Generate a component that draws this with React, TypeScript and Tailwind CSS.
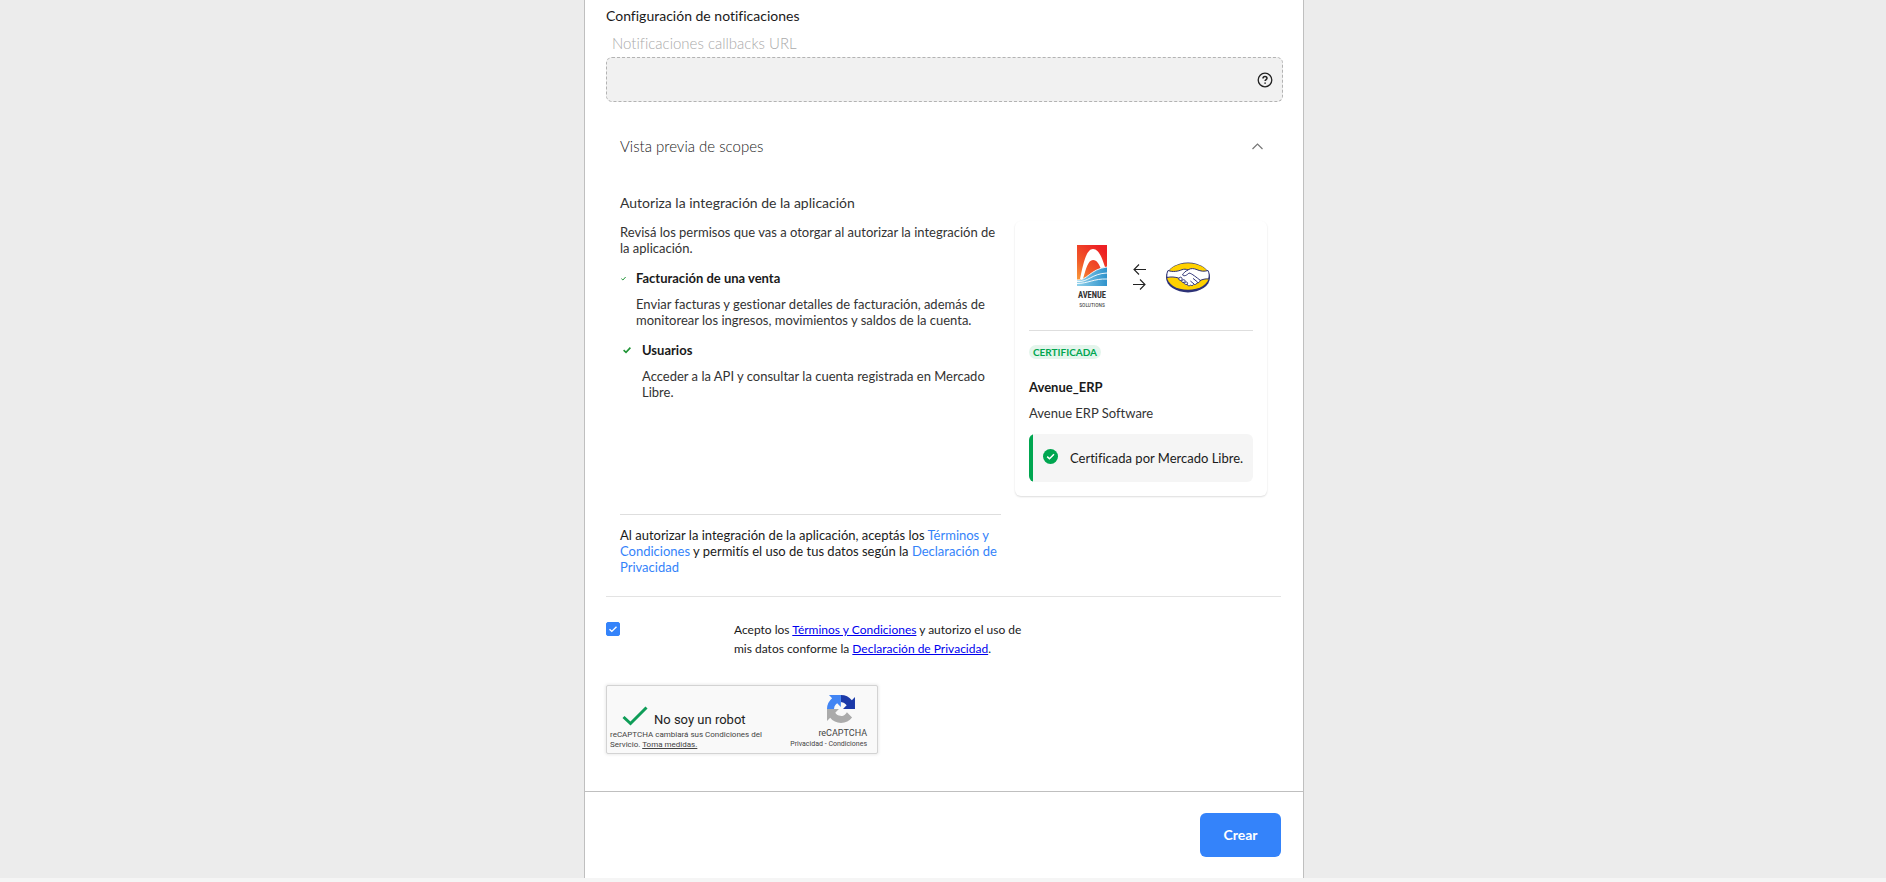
import React, { useState } from 'react';

const scopes = [
  {
    title: 'Facturación de una venta',
    lines: ['Enviar facturas y gestionar detalles de facturación, además de', 'monitorear los ingresos, movimientos y saldos de la cuenta.'],
    small: true,
  },
  {
    title: 'Usuarios',
    lines: ['Acceder a la API y consultar la cuenta registrada en Mercado', 'Libre.'],
    small: false,
  },
];

const HelpIcon = () => (
  <svg width="16" height="16" viewBox="0 0 16 16" fill="none" stroke="#222" strokeWidth="1.3">
    <circle cx="8" cy="8" r="6.8" />
    <path d="M6 6.400C6 5.200 6.900 4.500 8 4.500s2 .7 2 1.800c0 1.300-1.900 1.300-1.900 2.800" strokeWidth="1.500" />
    <path d="M7.300 10.400h1.600v1.400H7.300z" fill="#222" stroke="none" />
  </svg>
);

const Tick = ({ size }: { size: number }) => (
  <svg width={size} height={size} viewBox="0 0 8 8" fill="none" stroke="#1f9435" strokeWidth="1.6" className="shrink-0">
    <path d="M.6 4.200 3 6.400 7.400 1.600" />
  </svg>
);

const AvenueLogo = () => (
  <svg width="30" height="64" viewBox="0 0 30 64" role="img" aria-label="Avenue Solutions">
    <defs>
      <linearGradient id="sun" x1="0" y1="1" x2="0.7" y2="0">
        <stop offset="0" stopColor="#fbb040" />
        <stop offset="0.45" stopColor="#f15a29" />
        <stop offset="1" stopColor="#ed2024" />
      </linearGradient>
      <linearGradient id="sea" x1="0" y1="0" x2="1" y2="0">
        <stop offset="0" stopColor="#8fd0ea" />
        <stop offset="1" stopColor="#2f93cc" />
      </linearGradient>
    </defs>
    <path d="M0 0h30v41H0z" fill="url(#sun)" />
    <path d="M3 34C6 20 9 4 16 4c6 0 9 9 12 18l-4 2c-2-5-4-9-8-9-5 0-7 9-10 19z" fill="#fff" />
    <path d="M0 35c10 1 13-11 30-13v19H0z" fill="url(#sea)" />
    <path d="M0 35c10 1 13-11 30-13M0 36.500c11 1 15-8 30-8.500M0 38.500c11 0 17-5 30-4.500" fill="none" stroke="#fff" strokeWidth="0.900" />
    <text x="15" y="53" textAnchor="middle" fontSize="8.500" fontWeight="700" fill="#333" fontFamily="Roboto Condensed, Liberation Sans Narrow, Roboto, sans-serif">AVENUE</text>
    <text x="15" y="62" textAnchor="middle" fontSize="5.500" fill="#333" fontFamily="Roboto Condensed, Liberation Sans Narrow, Roboto, sans-serif">SOLUTIONS</text>
  </svg>
);

const MercadoLibreLogo = () => (
  <svg width="44" height="32" viewBox="0 0 44 32" role="img" aria-label="Mercado Libre">
    <ellipse cx="22" cy="16.500" rx="22" ry="15" fill="#2d3277" />
    <ellipse cx="22" cy="15.500" rx="21" ry="13.300" fill="#ffd100" />
    <path d="M2 9.500c5 1.800 10 .8 14-.8 2-.8 4-.6 6 .2 3-2 6-1.500 9-.2 4 1.600 7 2 11 .8 1.500 3 1.500 6 .5 8.500-3-.5-6 .5-8.500 1.500-.3 2-1.600 2.500-3 2.300-.5 1.600-2 2-3.200 1.600-1 1.400-2.300 1.400-3.300.8-1.200 1-3 .6-3.700-.8-2 .2-2.800-.8-2.800-2-1.500.3-2.600-.5-2.600-1.800-1.800.2-3-1-2.600-2.500C9 16 5 15.500 1 16.500c-.5-2.500 0-5 1-7z" fill="#fff" stroke="#2d3277" strokeWidth="1" />
    <path d="M22 9c-2.500 1-4.500 3-5.500 5 2 1.800 4.500 0 6.500-2 3 .5 7.500 4.500 11.500 7.500M13 17c2-2 4 0 2.600 2.500M16 19.500c2.400-2 4 0 2.500 2.200M19 21.500c2-1.500 3.500.5 2 2.500M31.500 21l-4.500-3.600M28 23l-3.600-3" fill="none" stroke="#2d3277" strokeWidth="1" />
  </svg>
);

const RecaptchaLogo = () => (
  <svg width="28" height="28" viewBox="0 0 64 64">
    <path d="M64 31.955a33 33 0 0 0-.037-1.380V4.640l-7.170 7.170A31.940 31.940 0 0 0 32 .036v16.150c.48 0 .86.050 1.130.160 4.970.390 9.270 3.130 11.800 7.100l-8.320 8.320L64 31.955" fill="#1c3aa9" />
    <path d="M32 .036c-.46.006-.92.018-1.380.037H4.550l7.170 7.170A31.950 31.950 0 0 0 0 32h16.040c0-.48.060-.86.160-1.130.39-4.970 3.130-9.270 7.100-11.800l8.320 8.320L32 .036" fill="#4285f4" />
    <path d="M0 32c.001.463.012.924.033 1.382v25.930l7.170-7.170C13.070 59.330 22 63.900 32 63.900c10.400 0 19.530-4.860 25.300-12.400L45.560 39.600a15.600 15.600 0 0 1-4.760 5.350c-2.050 1.600-4.960 2.900-8.970 2.900-.48 0-.86-.060-1.130-.160-4.970-.39-9.270-3.130-11.800-7.100l8.320-8.320L0 32" fill="#ababab" />
  </svg>
);

const AppCard = () => (
  <aside className="w-[252px] shrink-0 rounded-md px-3.5 pb-3.5 pt-5 shadow-[0_1px_2px_rgba(0,0,0,0.14)]">
    <div className="flex h-[90px] items-center justify-center border-b border-[#dedede] pb-[18px] pl-1">
      <div className="flex items-center">
        <AvenueLogo />
        <svg width="13" height="28" viewBox="0 0 13 28" fill="none" stroke="#222" strokeWidth="1.1" className="ml-[26px] mr-5">
          <path d="M13 6.500H1M6 1.500l-5 5 5 5M0 21.500h12M7 16.500l5 5-5 5" />
        </svg>
        <MercadoLibreLogo />
      </div>
    </div>
    <span className="mt-3.5 flex h-3.5 w-[72px] items-center justify-center rounded-full bg-[#e4f5ec] text-[10px] font-bold text-[#00a650]">
      CERTIFICADA
    </span>
    <h3 className="mt-5 text-[13px] leading-4 font-bold text-[#1a1a1a]">Avenue_ERP</h3>
    <p className="mt-2.5 text-[13px] leading-4">Avenue ERP Software</p>
    <div className="mt-[13px] flex h-12 items-center overflow-hidden rounded-md bg-[#f5f5f5]">
      <span className="h-full w-1 bg-[#00a650]" />
      <svg width="15" height="15" viewBox="0 0 15 15" className="mb-1 ml-2.5 shrink-0">
        <circle cx="7.500" cy="7.500" r="7.500" fill="#00a650" />
        <path d="M4.200 7.600 6.500 9.800 11 5.300" fill="none" stroke="#fff" strokeWidth="1.500" />
      </svg>
      <p className="ml-3 text-[13px] leading-4 whitespace-nowrap text-[#1a1a1a]">Certificada por Mercado Libre.</p>
    </div>
  </aside>
);

const Recaptcha = () => (
  <section className="mt-[27px] flex h-[69px] w-[272px] justify-between rounded-xs border border-[#d3d3d3] bg-[#f9f9f9] pr-2.5 pl-[3px] font-['Roboto',sans-serif] shadow-[0_0_3px_1px_rgba(0,0,0,0.08)]">
    <div className="pt-5">
      <div className="flex items-end pl-3">
        <svg width="26" height="20" viewBox="0 0 26 20" fill="none" stroke="#0f9d58" strokeWidth="3">
          <path d="m1.500 11 7 6.500L24.500 1.500" />
        </svg>
        <span className="ml-1.5 text-[13px] leading-3 text-[#222]">No soy un robot</span>
      </div>
      <p className="mt-1 text-[8px] leading-[10px] text-[#444]">
        reCAPTCHA cambiará sus Condiciones del
        <br />
        Servicio. <a href="#medidas" className="underline">Toma medidas.</a>
      </p>
    </div>
    <div className="flex flex-col items-end pt-[9px] text-[#444]">
      <div className="mr-3">
        <RecaptchaLogo />
      </div>
      <span className="mt-1 text-[9px] leading-3">reCAPTCHA</span>
      <span className="text-[7px] leading-[10px]">
        <a href="#privacidad">Privacidad</a> - <a href="#condiciones">Condiciones</a>
      </span>
    </div>
  </section>
);

export default function App() {
  const [accepted, setAccepted] = useState(true);
  const [open, setOpen] = useState(true);

  return (
    <div className="min-h-screen bg-[#f5f5f5] font-['Lato',sans-serif] text-[#333] [font-variant-ligatures:none]">
      <div className="bg-[#ececec] pl-0.5">
        <main className="mx-auto max-w-[720px] border-x border-[#bfbfbf] bg-white">
          <div className="pr-[22px] pb-[37px] pl-[21px]">
            <h2 className="pt-1.5 text-sm leading-5 text-[#1a1a1a]">Configuración de notificaciones</h2>
            <label htmlFor="callback" className="mt-[7px] block pl-1.5 text-[15px] leading-5 font-light text-[#aaa]">
              Notificaciones callbacks URL
            </label>
            <div className="mt-1 -mr-0.5 flex h-[45px] items-center rounded-md border border-dashed border-[#b3b3b3] bg-[#f1f1f1] pr-[9px]">
              <input id="callback" type="text" disabled className="h-full min-w-0 flex-1 bg-transparent px-3 text-sm" />
              <button type="button" aria-label="Ayuda">
                <HelpIcon />
              </button>
            </div>

            <section className="border-b border-[#e3e3e3] px-3.5 pt-[34px] pb-[21px]">
              <button type="button" onClick={() => setOpen(!open)} className="flex w-full items-center justify-between pr-1 text-left text-[15px] leading-5 font-light text-[#1a1a1a]">
                Vista previa de scopes
                <svg width="11" height="7" viewBox="0 0 11 7" fill="none" stroke="#777" strokeWidth="1.200">
                  <path d="m.5 6 5-5 5 5" />
                </svg>
              </button>

              {open && (
                <div className="mt-[37px] text-[13px] leading-4">
                  <h2 className="text-sm leading-5">Autoriza la integración de la aplicación</h2>
                  <div className="mt-2 flex items-start gap-3.5">
                    <div className="flex-1">
                      <div className="h-[294px] border-b border-[#dedede] pt-[3px]">
                        <p>
                          Revisá los permisos que vas a otorgar al autorizar la integración de
                          <br />
                          la aplicación.
                        </p>
                        <ul>
                          {scopes.map((s) => (
                            <li key={s.title} className="mt-3.5 flex gap-2.5">
                              <div className={s.small ? 'flex h-4 items-center pl-px' : 'flex h-4 items-center pr-px pl-[3px]'}>
                                <Tick size={s.small ? 5 : 8} />
                              </div>
                              <div>
                                <h3 className="font-bold text-[#1a1a1a]">{s.title}</h3>
                                <p className="mt-2.5">
                                  {s.lines[0]}
                                  <br />
                                  {s.lines[1]}
                                </p>
                              </div>
                            </li>
                          ))}
                        </ul>
                      </div>
                      <p className="mt-3 text-[#1a1a1a]">
                        Al autorizar la integración de la aplicación, aceptás los{' '}
                        <a href="#terminos" className="text-[#3483fa]">Términos y<br />Condiciones</a> y permitís el uso de tus datos según la{' '}
                        <a href="#privacidad" className="text-[#3483fa]">Declaración de<br />Privacidad</a>
                      </p>
                    </div>
                    <AppCard />
                  </div>
                </div>
              )}
            </section>

            <div className="mt-[23px] flex items-start text-xs leading-[19px] text-[#1a1a1a]">
              <div className="grid w-32 pt-0.5">
                <input
                  id="acepto"
                  type="checkbox"
                  checked={accepted}
                  onChange={(e) => setAccepted(e.target.checked)}
                  className="col-start-1 row-start-1 size-3.5 appearance-none rounded-xs border border-[#3483fa] checked:bg-[#3483fa]"
                />
                <svg width="14" height="14" viewBox="0 0 14 14" fill="none" stroke="#fff" strokeWidth="1.400" className="pointer-events-none col-start-1 row-start-1">
                  <path d="m3.500 7.200 2.300 2.200 4.700-4.600" />
                </svg>
              </div>
              <label htmlFor="acepto">
                Acepto los <a href="#terminos" className="text-[#0000ee] underline">Términos y Condiciones</a> y autorizo el uso de
                <br />
                mis datos conforme la <a href="#privacidad" className="text-[#0000ee] underline">Declaración de Privacidad</a>.
              </label>
            </div>

            <Recaptcha />
          </div>

          <footer className="flex justify-end border-t border-[#bfbfbf] py-[21px] pr-[22px]">
            <button type="button" className="h-11 w-[81px] rounded-md bg-[#3483fa] text-sm font-bold text-white">
              Crear
            </button>
          </footer>
        </main>
      </div>
    </div>
  );
}
